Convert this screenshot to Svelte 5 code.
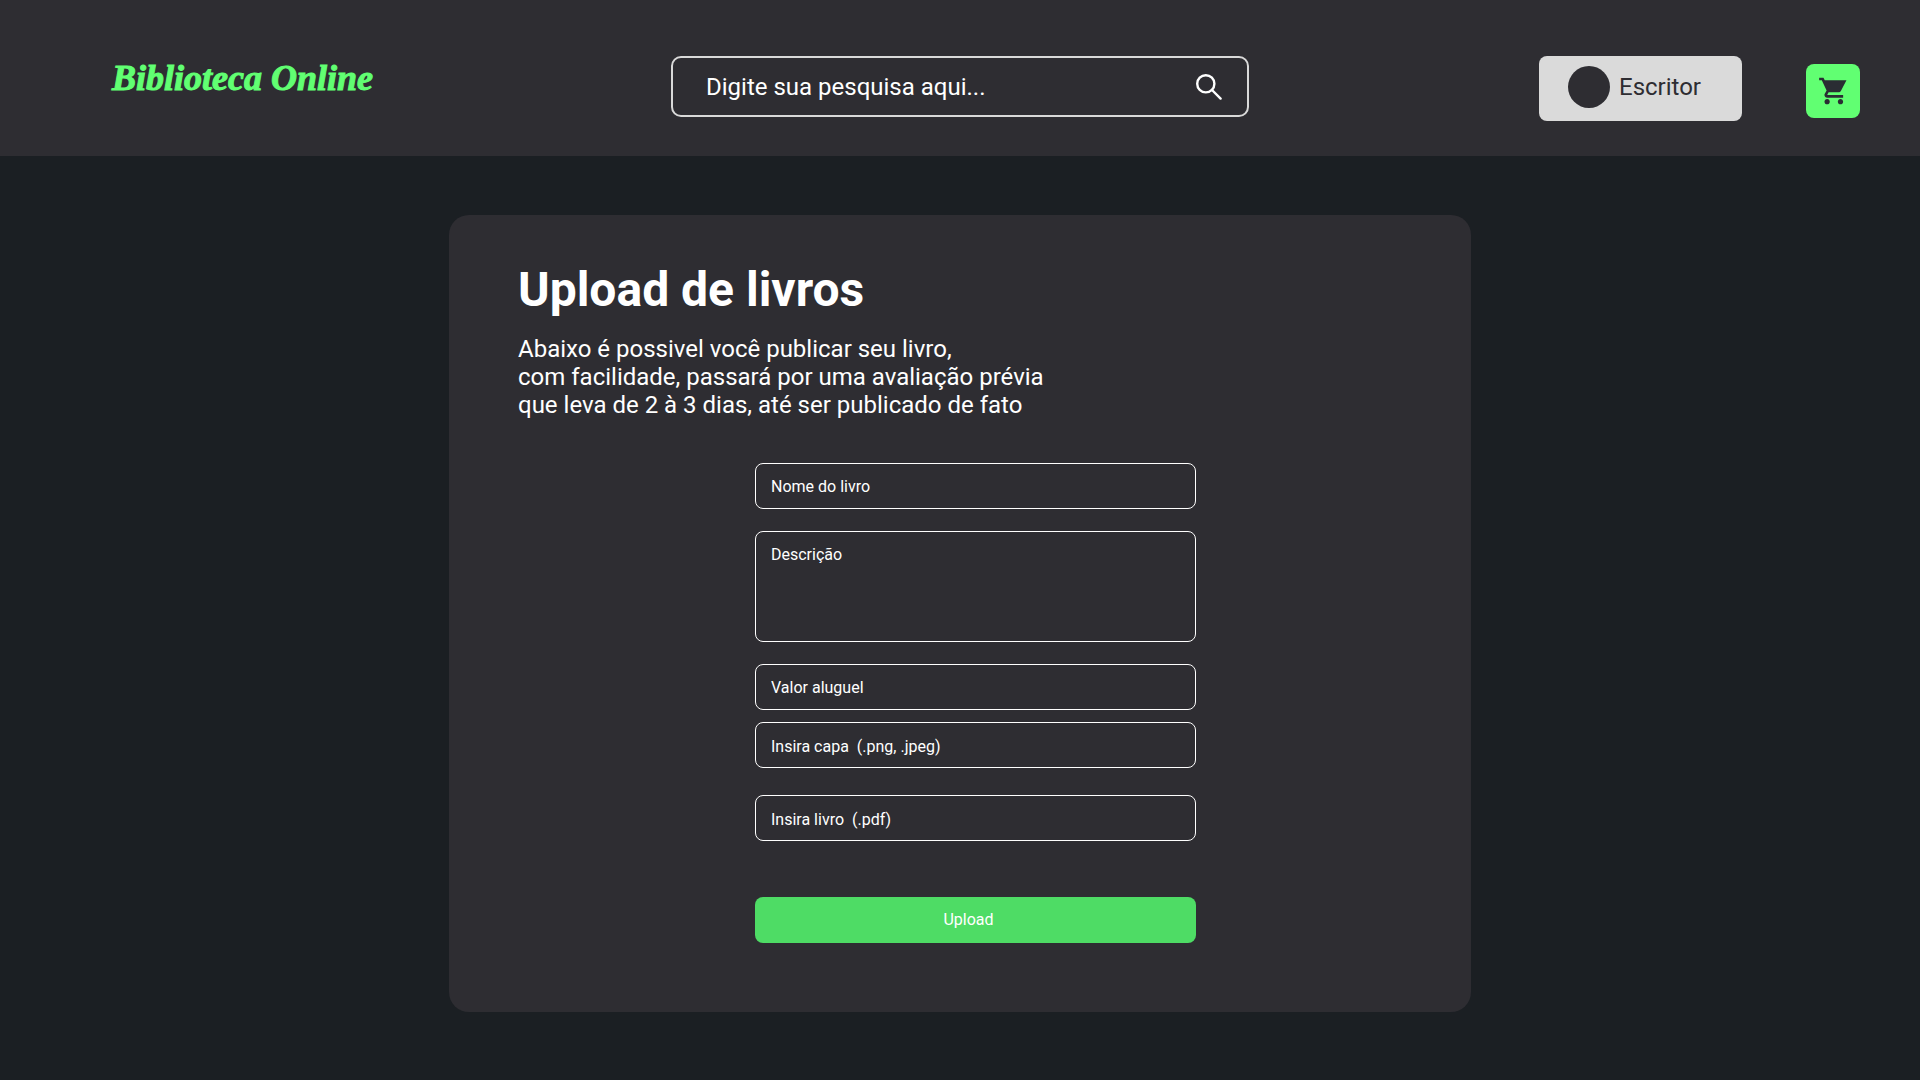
<script lang="ts">
  let query = $state('');
  let title = $state('');
  let description = $state('');
  let price = $state('');
</script>

<header class="topbar">
  <a class="brand" href="/">Biblioteca Online</a>

  <form class="search" role="search">
    <input type="search" bind:value={query} placeholder="Digite sua pesquisa aqui..." aria-label="Pesquisa" />
    <button class="search-button" aria-label="Pesquisar">
      <svg width="26" height="26" viewBox="0 0 26 26" fill="none" stroke="currentColor" stroke-width="2.4" stroke-linecap="round">
        <circle cx="9.8" cy="9.8" r="8.6" />
        <path d="M16 16 24.6 24.6" />
      </svg>
    </button>
  </form>

  <nav class="actions">
    <button class="profile" type="button">
      <span class="avatar"></span>
      Escritor
    </button>
    <a class="cart" href="/carrinho" aria-label="Carrinho">
      <svg width="32" height="32" viewBox="-0.6 0 24 24" fill="currentColor">
        <path d="M7 18c-1.1 0-1.99.9-1.99 2S5.9 22 7 22s2-.9 2-2-.9-2-2-2zM1 2v2h2l3.6 7.59-1.35 2.45c-.16.28-.25.61-.25.96 0 1.1.9 2 2 2h12v-2H7.42c-.14 0-.25-.11-.25-.25l.03-.12.9-1.63h7.45c.75 0 1.41-.41 1.75-1.03L21.5 4H5.21l-.94-2H1zm16 16c-1.1 0-1.99.9-1.99 2s.89 2 1.99 2 2-.9 2-2-.9-2-2-2z" />
      </svg>
    </a>
  </nav>
</header>

<main>
  <section class="card">
    <h1>Upload de livros</h1>
    <p>
      Abaixo é possivel você publicar seu livro,<br />
      com facilidade, passará por uma avaliação prévia<br />
      que leva de 2 à 3 dias, até ser publicado de fato
    </p>

    <form class="upload">
      <div class="group details">
        <input class="field" type="text" bind:value={title} placeholder="Nome do livro" aria-label="Nome do livro" />
        <textarea class="field" bind:value={description} placeholder="Descrição" aria-label="Descrição"></textarea>
        <input class="field" type="text" bind:value={price} placeholder="Valor aluguel" aria-label="Valor aluguel" />
      </div>
      <label class="field file cover">
        {'Insira capa  (.png, .jpeg)'}
        <input type="file" accept=".png,.jpeg" />
      </label>
      <label class="field file book">
        {'Insira livro  (.pdf)'}
        <input type="file" accept=".pdf" />
      </label>
      <button class="submit" type="submit">Upload</button>
    </form>
  </section>
</main>

<style>
  :global(body) {
    background: #1b1f23;
    color: #fff;
    font-family: Roboto, 'Liberation Sans', sans-serif;
  }

  :global(*) {
    box-sizing: border-box;
  }

  input,
  textarea,
  button {
    font: inherit;
    color: inherit;
    margin: 0;
  }

  input::placeholder,
  textarea::placeholder {
    color: inherit;
    opacity: 1;
  }

  .topbar {
    display: grid;
    grid-template-columns: 1fr minmax(0, 578px) 1fr;
    align-items: start;
    min-height: 156px;
    padding-top: 56px;
    background: #2e2d32;
  }

  .brand {
    padding-left: 112px;
    font: italic bold 36px/44px 'Liberation Serif', serif;
    color: #61ff72;
    text-decoration: none;
    white-space: nowrap;
    -webkit-text-stroke: 1px currentColor;
  }

  .search {
    display: flex;
    align-items: center;
    height: 61px;
    padding: 0 25px 0 33px;
    border: 2px solid #d9d9d9;
    border-radius: 10px;
  }

  .search input {
    flex: 1;
    min-width: 0;
    padding: 0;
    border: 0;
    outline: 0;
    appearance: none;
    background: transparent;
    font-size: 24px;
    line-height: 28px;
  }

  .search-button {
    display: flex;
    padding: 0;
    border: 0;
    background: transparent;
  }

  .actions {
    display: flex;
    justify-content: flex-end;
    align-items: flex-start;
    gap: 64px;
    padding-right: 60px;
  }

  .profile {
    display: flex;
    align-items: center;
    gap: 9px;
    padding: 10px 41px 13px 29px;
    border: 0;
    border-radius: 8px;
    background: #dadada;
    color: #2e2d32;
    font-size: 24px;
    line-height: 28px;
  }

  .avatar {
    width: 42px;
    height: 42px;
    border-radius: 50%;
    background: #2e2d32;
  }

  .cart {
    display: grid;
    place-items: center;
    width: 54px;
    height: 54px;
    margin-top: 8px;
    border-radius: 8px;
    background: #61ff72;
    color: #2a2d33;
  }

  main {
    display: flex;
    justify-content: center;
    padding: 59px 24px 68px;
  }

  .card {
    width: 100%;
    max-width: 1022px;
    padding: 47px 69px 69px;
    border-radius: 20px;
    background: #2e2d32;
  }

  h1 {
    margin: 0 0 17px;
    font-size: 48px;
    line-height: 56px;
  }

  p {
    margin: 0 0 44px;
    font-size: 24px;
    line-height: 28px;
  }

  .upload {
    display: flex;
    flex-direction: column;
    max-width: 472px;
    margin: 0 auto;
    padding-left: 31px;
    font-size: 16px;
    line-height: 20px;
  }

  .group {
    display: flex;
    flex-direction: column;
    gap: 22px;
  }

  .field {
    width: 100%;
    height: 46px;
    padding: 1px 15px 0;
    border: 1px solid #fff;
    border-radius: 8px;
    outline: 0;
    background: transparent;
  }

  textarea.field {
    display: block;
    height: 111px;
    padding-top: 13px;
    resize: none;
  }

  .file {
    display: flex;
    align-items: center;
    padding-top: 3px;
    white-space: pre;
  }

  .file input {
    width: 0;
    opacity: 0;
  }

  .cover {
    margin-top: 12px;
  }

  .book {
    margin-top: 27px;
  }

  .submit {
    height: 46px;
    margin-top: 56px;
    padding: 0 14px 0 0;
    border: 0;
    border-radius: 8px;
    background: #4edc65;
  }
</style>
